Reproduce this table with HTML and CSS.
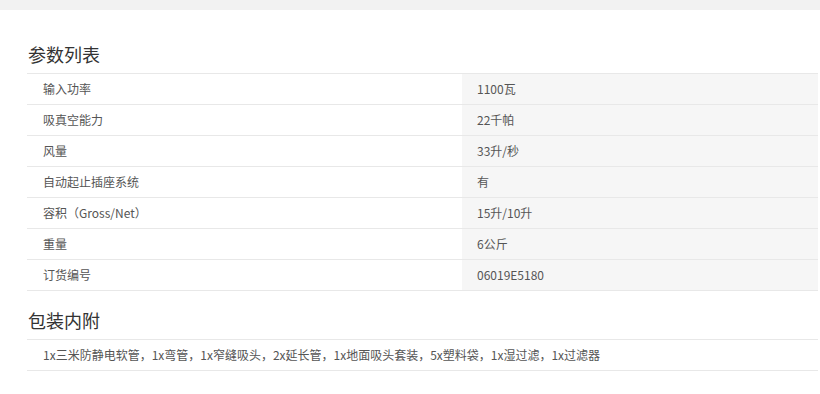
FILE: index.html
```html
<!DOCTYPE html>
<html lang="zh-CN">
<head>
  <meta charset="UTF-8" />
  <meta name="viewport" content="width=device-width, initial-scale=1.0" />
  <title>参数列表</title>
  <link rel="stylesheet" href="styles.css">
</head>
<body>

  <div class="top-bar"></div>

  <main class="specs">
    <!-- 参数 -->
    <section class="spec-block first">
      <h2 class="spec-title">参数列表</h2>
      <table class="spec-table">
        <tr><td class="label">输入功率</td><td class="value">1100瓦</td></tr>
        <tr><td class="label">吸真空能力</td><td class="value">22千帕</td></tr>
        <tr><td class="label">风量</td><td class="value">33升/秒</td></tr>
        <tr><td class="label">自动起止插座系统</td><td class="value">有</td></tr>
        <tr><td class="label">容积（Gross/Net）</td><td class="value">15升/10升</td></tr>
        <tr><td class="label">重量</td><td class="value">6公斤</td></tr>
        <tr><td class="label">订货编号</td><td class="value">06019E5180</td></tr>
      </table>
    </section>

    <!-- 包装内附 -->
    <section class="spec-block">
      <h2 class="spec-title">包装内附</h2>
      <table class="spec-table">
        <tr><td class="label">1x三米防静电软管，1x弯管，1x窄缝吸头，2x延长管，1x地面吸头套装，5x塑料袋，1x湿过滤，1x过滤器</td></tr>
      </table>
    </section>
  </main>

</body>
</html>
```

FILE: styles.css
```css
:root {
  --line-color: #e8e8e8;
  --value-bg: #f6f6f6;
  --text-color: #555;
  --title-color: #333;
}

* {
  box-sizing: border-box;
  margin: 0;
  padding: 0;
}

body {
  background: #fff;
  font-family: "Noto Sans CJK SC", "Liberation Sans", sans-serif;
  color: var(--text-color);
}

.top-bar {
  height: 10px;
  background: #f2f2f2;
}

.specs {
  padding-left: 27px;
  width: 818px;
}

.spec-block.first {
  margin-top: 15px;
}

.spec-title {
  font-size: 18px;
  font-weight: normal;
  line-height: 24px;
  color: var(--title-color);
  padding: 17px 0 7px 1px;
}

.spec-table {
  width: 100%;
  border-collapse: collapse;
  border-top: 1px solid var(--line-color);
}

.spec-table td {
  height: 31px;
  border-bottom: 1px solid var(--line-color);
  font-size: 12px;
  line-height: 30px;
  vertical-align: middle;
  white-space: nowrap;
}

.spec-table .label {
  padding-left: 16px;
}

.spec-table .value {
  width: 356px;
  padding-left: 15px;
  background: var(--value-bg);
}
```
